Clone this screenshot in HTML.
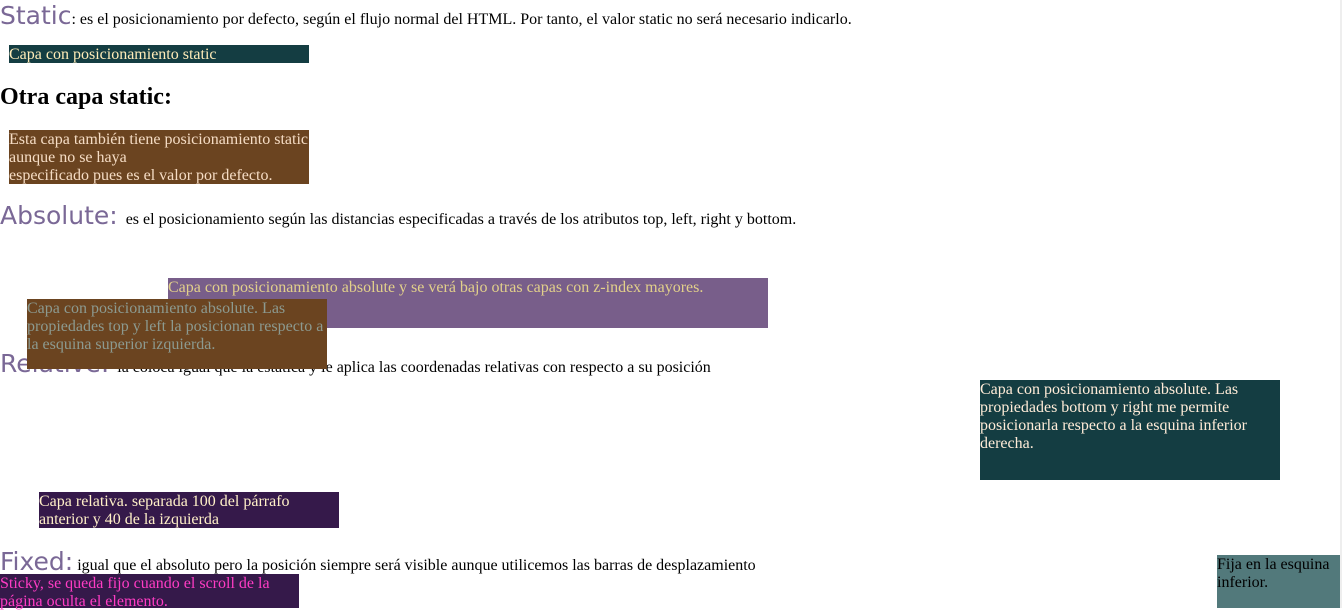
<!DOCTYPE html>
<html><head><meta charset="utf-8"><style>
body{margin:0;width:1342px;height:608px;overflow:hidden;position:relative;background:#fff;font-family:"Liberation Serif",serif;font-size:16px;line-height:18px;color:#000}
.a{position:absolute;white-space:nowrap}
.h{font-family:"DejaVu Sans","Liberation Sans",sans-serif;font-size:25px;color:#7a6896;font-weight:normal}
.b{position:absolute;width:300px;box-sizing:border-box;padding-top:1px}
</style></head><body>
<div class="a" style="left:0;top:3px;line-height:26px"><span class="h">Static</span>: es el posicionamiento por defecto, según el flujo normal del HTML. Por tanto, el valor static no será necesario indicarlo.</div>
<div class="b" style="left:9px;top:45px;height:18px;background:#143d42;color:#ffecb8">Capa con posicionamiento static</div>
<div class="a" style="left:0;top:84px;font-weight:bold;font-size:24px;line-height:27px">Otra capa static:</div>
<div class="b" style="left:9px;top:130px;height:54px;background:#6b4420;color:#f5dcc4">Esta capa también tiene posicionamiento static aunque no se haya<br>especificado pues es el valor por defecto.</div>
<div class="a" style="left:0;top:203px;line-height:26px"><span class="h">Absolute:</span>&nbsp; es el posicionamiento según las distancias especificadas a través de los atributos top, left, right y bottom.</div>
<div class="a" style="left:0;top:351px;line-height:26px"><span class="h">Relative:</span>&nbsp; la coloca igual que la estática y le aplica las coordenadas relativas con respecto a su posición</div>
<div class="b" style="left:168px;top:278px;width:600px;height:50px;background:#785e8a;color:#e2d08a">Capa con posicionamiento absolute y se verá bajo otras capas con z-index mayores.</div>
<div class="b" style="left:27px;top:299px;height:70px;background:#6b4420;color:#8c9a90">Capa con posicionamiento absolute. Las propiedades top y left la posicionan respecto a la esquina superior izquierda.</div>
<div class="b" style="left:980px;top:380px;height:100px;background:#143d42;color:#ffecd8">Capa con posicionamiento absolute. Las propiedades bottom y right me permite posicionarla respecto a la esquina inferior derecha.</div>
<div class="b" style="left:39px;top:492px;height:36px;background:#35194a;color:#fff0c8">Capa relativa. separada 100 del párrafo anterior y 40 de la izquierda</div>
<div class="a" style="left:0;top:549px;line-height:26px"><span class="h">Fixed:</span> igual que el absoluto pero la posición siempre será visible aunque utilicemos las barras de desplazamiento</div>
<div class="b" style="left:0;top:574px;width:299px;height:34px;background:#35194a;color:#ff3cc4">Sticky, se queda fijo cuando el scroll de la página oculta el elemento.</div>
<div class="b" style="left:1217px;top:555px;width:123px;height:53px;background:#52797b;color:#000">Fija en la esquina inferior.</div>
<div style="position:absolute;left:1340px;top:0;width:2px;height:608px;background:#eee"></div>
</body></html>
